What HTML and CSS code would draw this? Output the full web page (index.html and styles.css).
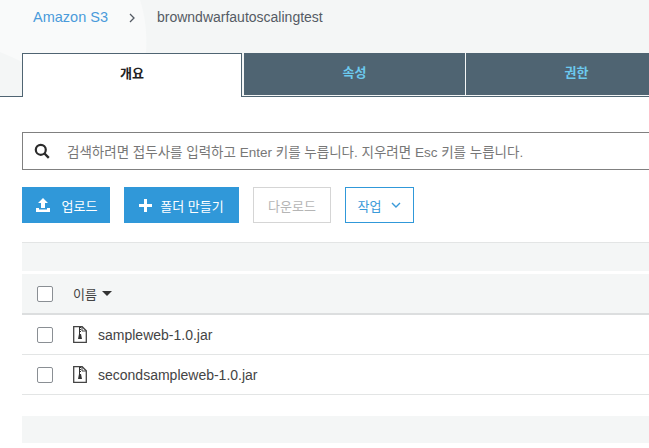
FILE: index.html
```html
<!DOCTYPE html>
<html lang="ko">
<head>
    <meta charset="UTF-8">
    <meta name="viewport" content="width=device-width, initial-scale=1.0">
    <title>browndwarfautoscalingtest</title>
    <link rel="stylesheet" href="styles.css">
</head>
<body>
    <div class="top">
        <svg class="swoosh" width="160" height="97" viewBox="0 0 160 97">
            <path d="M0 0H140C150 30 148 70 136 97H62C50 75 25 62 0 52Z" fill="#f9fafa"/>
        </svg>
        <div class="breadcrumb">
            <a class="crumb-link">Amazon S3</a>
            <svg class="crumb-sep" width="7" height="10" viewBox="0 0 7 10"><path d="M1 1l4 4-4 4" fill="none" stroke="#545b64" stroke-width="1.3"/></svg>
            <span class="crumb-current">browndwarfautoscalingtest</span>
        </div>
        <div class="tabs">
            <div class="tab active">개요</div>
            <div class="tab">속성</div>
            <div class="tab">권한</div>
        </div>
    </div>

    <div class="content">
        <div class="search">
            <svg class="search-icon" width="16" height="16" viewBox="0 0 16 16">
                <circle cx="6.8" cy="6.8" r="5" fill="none" stroke="#2b2b2b" stroke-width="2.2"/>
                <path d="M10.5 10.5l4.3 4.3" stroke="#2b2b2b" stroke-width="2.4"/>
            </svg>
            <span class="search-text">검색하려면 접두사를 입력하고 Enter 키를 누릅니다. 지우려면 Esc 키를 누릅니다.</span>
        </div>

        <div class="actions">
            <button class="btn primary upload">
                <svg width="16" height="16" viewBox="0 0 16 16">
                    <path d="M8 1l5 5H10v5H6V6H3Z" fill="#fff"/>
                    <path d="M1 11h3v1.500h8V11h3v4H1Z" fill="#fff"/>
                </svg>
                업로드
            </button>
            <button class="btn primary folder">
                <svg width="13" height="13" viewBox="0 0 13 13"><path d="M5 0h3v5h5v3H8v5H5V8H0V5h5Z" fill="#fff"/></svg>
                폴더 만들기
            </button>
            <button class="btn disabled">다운로드</button>
            <button class="btn outline">
                작업
                <svg width="10" height="6" viewBox="0 0 10 6"><path d="M1 1l4 4 4-4" fill="none" stroke="#3a9ad9" stroke-width="1.4"/></svg>
            </button>
        </div>

        <div class="band"></div>

        <div class="table-head">
            <span class="check"></span>
            <span class="head-name">이름</span>
            <span class="sort-arrow"></span>
        </div>
        <div class="row">
            <span class="check"></span>
            <svg class="file-icon" width="14" height="17" viewBox="0 0 14 17">
                <path d="M.7.700h8.500l4.100 4.100v11.500H.7Z" fill="#fff" stroke="#444" stroke-width="1.300"/>
                <path d="M9 1v4h4" fill="none" stroke="#444"/>
                <path d="M6 1h2v1H7v1h1v1H7v1h1v1H7v2h1l1 5H5l1-5Z" fill="#333"/>
            </svg>
            <span class="file-name">sampleweb-1.0.jar</span>
        </div>
        <div class="row">
            <span class="check"></span>
            <svg class="file-icon" width="14" height="17" viewBox="0 0 14 17">
                <path d="M.7.700h8.500l4.100 4.100v11.500H.7Z" fill="#fff" stroke="#444" stroke-width="1.300"/>
                <path d="M9 1v4h4" fill="none" stroke="#444"/>
                <path d="M6 1h2v1H7v1h1v1H7v1h1v1H7v2h1l1 5H5l1-5Z" fill="#333"/>
            </svg>
            <span class="file-name">secondsampleweb-1.0.jar</span>
        </div>

        <div class="band footer-band"></div>
    </div>
</body>
</html>
```

FILE: styles.css
```css
html, body {
    margin: 0;
    padding: 0;
    height: 448px;
    overflow: hidden;
    background: #fff;
    font-family: "Liberation Sans", "Noto Sans CJK KR", sans-serif;
    font-size: 14px;
    color: #444;
}
.top {
    position: relative;
    height: 97px;
    box-sizing: border-box;
    background: #f4f6f6;
    border-bottom: 1px solid #4f6472;
    overflow: visible;
}
.swoosh {
    position: absolute;
    left: 0;
    top: 0;
}
.breadcrumb {
    position: relative;
    height: 53px;
    box-sizing: border-box;
    padding: 9px 0 0 33px;
    display: flex;
    align-items: flex-start;
    line-height: 17px;
}
.crumb-link {
    color: #4a9bdb;
    font-size: 14.500px;
}
.crumb-sep {
    margin: 4px 0 0 21px;
}
.crumb-current {
    margin-left: 21px;
    color: #545b64;
    font-size: 14px;
}
.tabs {
    position: relative;
    display: flex;
    height: 44px;
    padding-left: 22px;
}
.tab {
    width: 221px;
    height: 42px;
    margin-right: 1px;
    flex: none;
    background: #4f6472;
    color: #6cc9ee;
    font-size: 13px;
    font-weight: bold;
    text-align: center;
    line-height: 40px;
}
.tab.active {
    width: 218px;
    height: 43px;
    margin-right: 2px;
    box-sizing: content-box;
    background: #fff;
    color: #222;
    border: 1px solid #4f6472;
    border-bottom: none;
    line-height: 40px;
}
.content {
    padding: 35px 0 0 22px;
}
.search {
    height: 38px;
    box-sizing: border-box;
    width: 640px;
    display: flex;
    align-items: center;
    border: 1px solid #808080;
    border-right: none;
    padding-left: 11px;
}
.search-icon {
    flex: none;
}
.search-text {
    margin-left: 17px;
    color: #777;
    font-size: 13.500px;
    white-space: nowrap;
}
.actions {
    display: flex;
    gap: 14px;
    margin-top: 17px;
}
.btn {
    height: 36px;
    box-sizing: border-box;
    padding: 0;
    border: 0;
    font-family: inherit;
    font-size: 13px;
    display: flex;
    align-items: center;
    justify-content: center;
}
.primary {
    background: #3098d9;
    color: #fff;
}
.upload {
    width: 88px;
    gap: 11px;
}
.folder {
    width: 115px;
    gap: 8px;
}
.disabled {
    width: 78px;
    background: #fff;
    border: 1px solid #d5d5d5;
    color: #b5b5b5;
}
.outline {
    width: 69px;
    gap: 10px;
    background: #fff;
    border: 1px solid #3098d9;
    color: #3a9ad9;
}
.band {
    height: 28px;
    margin-top: 19px;
    background: #f4f6f6;
    border-top: 1px solid #e3e5e5;
}
.table-head {
    height: 41px;
    box-sizing: border-box;
    margin-top: 3px;
    background: #f4f6f6;
    border-bottom: 2px solid #dcdedf;
    display: flex;
    align-items: center;
    padding-left: 15px;
}
.check {
    width: 14px;
    height: 14px;
    flex: none;
    background: #fff;
    border: 1px solid #8a8f94;
    border-radius: 2px;
}
.head-name {
    margin-left: 20px;
    font-size: 13px;
    color: #444;
}
.sort-arrow {
    width: 0;
    height: 0;
    margin-left: 5px;
    border-left: 5px solid transparent;
    border-right: 5px solid transparent;
    border-top: 5px solid #333;
}
.row {
    height: 39px;
    display: flex;
    align-items: center;
    padding-left: 15px;
    border-bottom: 1px solid #e3e5e5;
}
.row:last-of-type {
    border-bottom: none;
}
.file-icon {
    margin-left: 20px;
    flex: none;
}
.file-name {
    margin-left: 11px;
    font-size: 14px;
    color: #444;
}
.footer-band {
    margin-top: 21px;
    height: 27px;
    border-top: none;
}
```
